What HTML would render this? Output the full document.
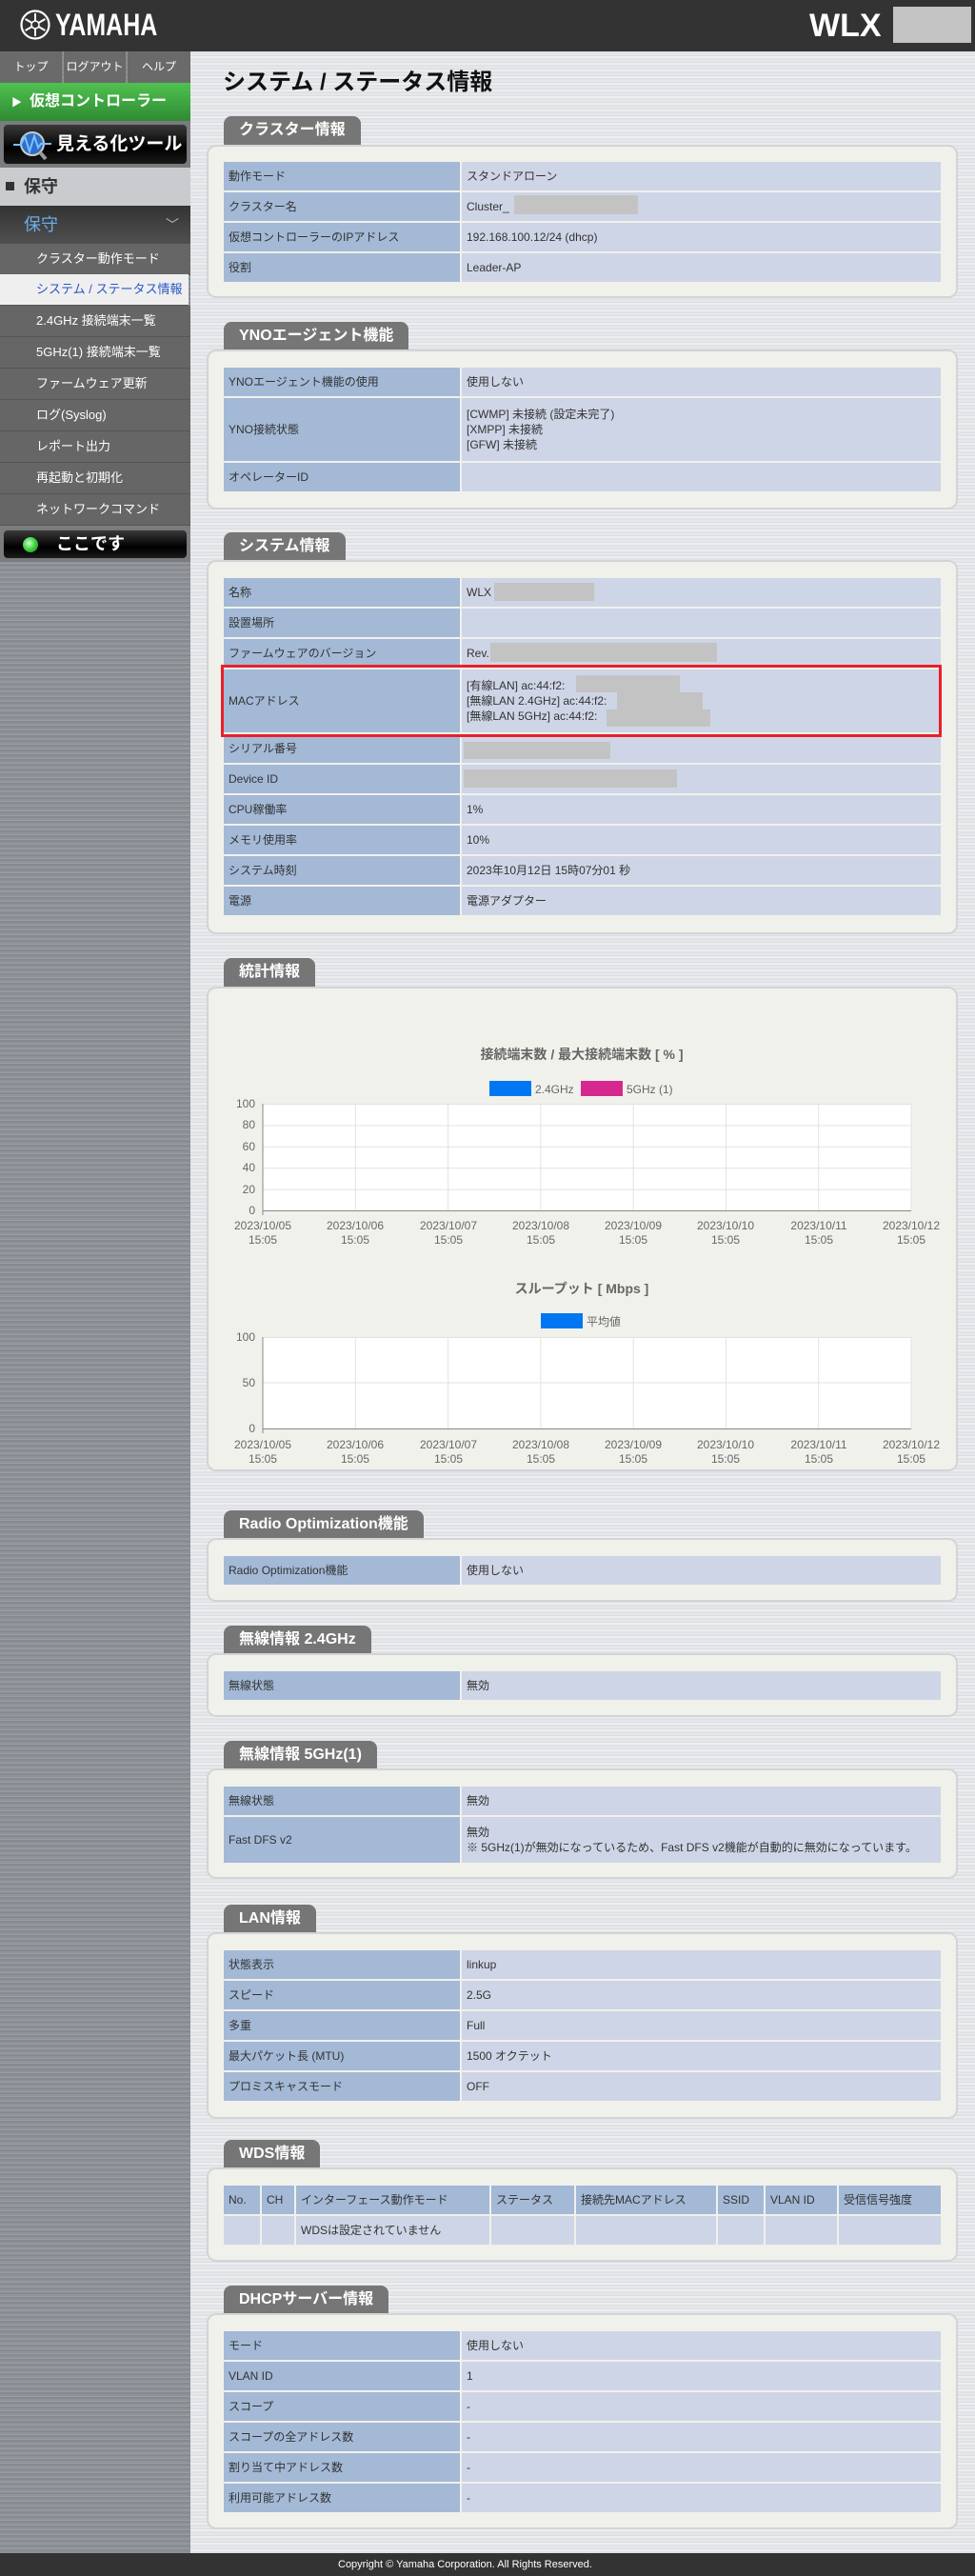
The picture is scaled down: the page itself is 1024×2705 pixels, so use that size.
<!DOCTYPE html>
<html><head><meta charset="utf-8">
<style>
*{margin:0;padding:0;box-sizing:border-box}
body{width:1024px;height:2705px;position:relative;overflow:hidden;font-family:"Liberation Sans","Noto Sans CJK JP",sans-serif;font-size:13px;color:#333;
background:repeating-linear-gradient(180deg,#e5e7ea 0,#e5e7ea 2px,#dadde1 2px,#dadde1 3px,#eceef0 3px,#eceef0 5px,#e0e3e6 5px,#e0e3e6 7px);}
.abs{position:absolute}
#hdr{left:0;top:0;width:1024px;height:54px;background:#333}
#side{left:0;top:54px;width:200px;height:2627px;background:repeating-linear-gradient(180deg,#8f9297 0,#8f9297 2px,#9a9da2 2px,#9a9da2 3px,#878a90 3px,#878a90 5px)}
#foot{left:0;top:2681px;width:1024px;height:24px;background:#333;color:#fff;font-size:11px;line-height:24px}
.nav{top:54px;height:33px;background:#6a6a6a;color:#fff;font-size:12px;text-align:center;line-height:33px}
.item{left:0;width:200px;height:33px;background:#666;color:#fff;font-size:13px;line-height:32px;padding-left:38px;border-bottom:1px solid #555}
.tab{left:235px;height:30px;background:#767676;border-radius:8px 8px 0 0;color:#fff;font-weight:bold;font-size:16px;line-height:30px;padding:0 16px}
.panel{left:217px;width:789px;background:#f1f1ec;border:2px solid #d2d4d6;border-radius:10px}
table{position:absolute;left:233px;width:757px;border-spacing:2px;border-collapse:separate}
td{font-size:12px;padding:0 5px;vertical-align:middle;line-height:16px;white-space:nowrap}
td.l{background:#a3b9d6;width:248px}
td.v{background:#ced5e6}
.red{background:#c3c3c3;position:absolute}
svg text{font-family:"Liberation Sans","Noto Sans CJK JP",sans-serif}
</style></head><body>
<div id="hdr" class="abs">
 <svg class="abs" style="left:20px;top:9px" width="34" height="34" viewBox="0 0 34 34"><circle cx="17" cy="17" r="14.5" fill="none" stroke="#fff" stroke-width="2.2"/><g stroke="#fff" stroke-width="2"><line x1="17" y1="5" x2="17" y2="29"/><line x1="6.6" y1="11" x2="27.4" y2="23"/><line x1="6.6" y1="23" x2="27.4" y2="11"/></g><circle cx="17" cy="17" r="4" fill="#333" stroke="#fff" stroke-width="1.5"/></svg>
 <div class="abs" style="left:58px;top:6px;color:#fff;font-weight:bold;font-size:32px;line-height:40px;transform:scaleX(0.78);transform-origin:0 0">YAMAHA</div>
 <div class="abs" style="left:850px;top:8px;color:#fff;font-weight:bold;font-size:34px;line-height:38px">WLX</div>
 <div class="red" style="left:938px;top:7px;width:82px;height:38px"></div>
</div>
<div id="side" class="abs"></div>
<div class="abs nav" style="left:0;width:66px;border-right:1px solid #888">トップ</div>
<div class="abs nav" style="left:67px;width:66px;border-right:1px solid #888">ログアウト</div>
<div class="abs nav" style="left:134px;width:66px">ヘルプ</div>
<div class="abs" style="left:0;top:87px;width:200px;height:40px;background:linear-gradient(#4fc24f,#2f8a33);color:#fff;font-weight:bold;font-size:16px;line-height:40px;padding-left:12px"><span style="font-size:11px;margin-right:8px">▶</span>仮想コントローラー</div>
<div class="abs" style="left:0;top:127px;width:200px;height:49px;background:#7a7c80"></div>
<div class="abs" style="left:3px;top:130px;width:194px;height:43px;background:linear-gradient(#3a3a3a,#000 60%,#1a1a1a);border:1px solid #777;border-radius:5px;color:#fff;font-weight:bold;font-size:19px;line-height:41px;padding-left:55px">見える化ツール
 <svg class="abs" style="left:8px;top:4px" width="44" height="36" viewBox="0 0 44 36"><circle cx="22" cy="16" r="12" fill="#2d6fc4" stroke="#ccc" stroke-width="2"/><path d="M2 17h8l4-9 5 16 5-16 4 12 3-4h11" fill="none" stroke="#7cc0ff" stroke-width="2"/><line x1="30" y1="25" x2="36" y2="32" stroke="#999" stroke-width="4"/></svg></div>
<div class="abs" style="left:0;top:176px;width:200px;height:40px;background:#c9cbcf;color:#333;font-weight:bold;font-size:18px;line-height:40px;padding-left:6px"><span style="display:inline-block;width:9px;height:9px;background:#333;margin-right:10px;vertical-align:2px"></span>保守</div>
<div class="abs" style="left:0;top:216px;width:200px;height:40px;background:linear-gradient(#333,#505050);color:#6aaee8;font-size:18px;line-height:40px;padding-left:25px">保守<span style="position:absolute;right:12px;top:0;color:#bbb;font-size:14px">﹀</span></div>
<div class="abs item" style="top:256px">クラスター動作モード</div>
<div class="abs item" style="top:288px;width:198px;background:#efefef;color:#2a56c6;padding-left:38px">システム / ステータス情報</div>
<div class="abs item" style="top:321px">2.4GHz 接続端末一覧</div>
<div class="abs item" style="top:354px">5GHz(1) 接続端末一覧</div>
<div class="abs item" style="top:387px">ファームウェア更新</div>
<div class="abs item" style="top:420px">ログ(Syslog)</div>
<div class="abs item" style="top:453px">レポート出力</div>
<div class="abs item" style="top:486px">再起動と初期化</div>
<div class="abs item" style="top:519px">ネットワークコマンド</div>
<div class="abs" style="left:0;top:552px;width:200px;height:38px;background:#7a7c80"></div>
<div class="abs" style="left:3px;top:556px;width:194px;height:31px;background:linear-gradient(#3a3a3a,#000 60%,#1a1a1a);border:1px solid #777;border-radius:5px;color:#fff;font-weight:bold;font-size:18px;line-height:29px;padding-left:55px">ここです<span style="position:absolute;left:20px;top:7px;width:16px;height:16px;border-radius:50%;background:radial-gradient(circle at 40% 40%,#c8ffc8,#3ccf3c 50%,#1a8a1a)"></span></div>

<div class="abs" style="left:234px;top:72px;font-size:24px;font-weight:bold;color:#111;line-height:30px">システム / ステータス情報</div>

<div class="abs tab" style="top:122px">クラスター情報</div>
<div class="abs panel" style="top:152px;height:161px"></div>
<table style="top:168px"><tr style="height:30px"><td class="l">動作モード</td><td class="v">スタンドアローン</td></tr>
<tr style="height:30px"><td class="l">クラスター名</td><td class="v">Cluster_</td></tr>
<tr style="height:30px"><td class="l">仮想コントローラーのIPアドレス</td><td class="v">192.168.100.12/24 (dhcp)</td></tr>
<tr style="height:30px"><td class="l">役割</td><td class="v">Leader-AP</td></tr></table>
<div class="red" style="left:540px;top:205px;width:130px;height:20px"></div>

<div class="abs tab" style="top:338px">YNOエージェント機能</div>
<div class="abs panel" style="top:367px;height:168px"></div>
<table style="top:384px"><tr style="height:30px"><td class="l">YNOエージェント機能の使用</td><td class="v">使用しない</td></tr>
<tr style="height:66px"><td class="l">YNO接続状態</td><td class="v">[CWMP] 未接続 (設定未完了)<br>[XMPP] 未接続<br>[GFW] 未接続</td></tr>
<tr style="height:30px"><td class="l">オペレーターID</td><td class="v"></td></tr></table>

<div class="abs tab" style="top:559px">システム情報</div>
<div class="abs panel" style="top:588px;height:393px"></div>
<table style="top:605px"><tr style="height:30px"><td class="l">名称</td><td class="v">WLX</td></tr>
<tr style="height:30px"><td class="l">設置場所</td><td class="v"></td></tr>
<tr style="height:30px"><td class="l">ファームウェアのバージョン</td><td class="v">Rev.</td></tr>
<tr style="height:66px"><td class="l">MACアドレス</td><td class="v">[有線LAN] ac:44:f2:<br>[無線LAN 2.4GHz] ac:44:f2:<br>[無線LAN 5GHz] ac:44:f2:</td></tr>
<tr style="height:30px"><td class="l">シリアル番号</td><td class="v"></td></tr>
<tr style="height:30px"><td class="l">Device ID</td><td class="v"></td></tr>
<tr style="height:30px"><td class="l">CPU稼働率</td><td class="v">1%</td></tr>
<tr style="height:30px"><td class="l">メモリ使用率</td><td class="v">10%</td></tr>
<tr style="height:30px"><td class="l">システム時刻</td><td class="v">2023年10月12日 15時07分01 秒</td></tr>
<tr style="height:30px"><td class="l">電源</td><td class="v">電源アダプター</td></tr></table>
<div class="red" style="left:519px;top:612px;width:105px;height:19px"></div>
<div class="red" style="left:515px;top:675px;width:238px;height:20px"></div>
<div class="red" style="left:605px;top:709px;width:109px;height:18px"></div>
<div class="red" style="left:648px;top:727px;width:90px;height:18px"></div>
<div class="red" style="left:637px;top:745px;width:109px;height:18px"></div>
<div class="red" style="left:487px;top:779px;width:154px;height:18px"></div>
<div class="red" style="left:487px;top:808px;width:224px;height:19px"></div>
<div class="abs" style="left:232px;top:698px;width:757px;height:76px;border:3px solid #e8202a"></div>

<div class="abs tab" style="top:1006px">統計情報</div>
<div class="abs panel" style="top:1036px;height:509px"></div>
<svg class="abs" style="left:200px;top:1036px" width="800" height="509" font-size="12" fill="#666">
 <text x="411" y="76" text-anchor="middle" font-weight="bold" font-size="14">接続端末数 / 最大接続端末数 [ % ]</text>
 <rect x="314" y="99" width="44" height="16" fill="#0077f2"/><text x="362" y="112">2.4GHz</text>
 <rect x="410" y="99" width="44" height="16" fill="#d6298f"/><text x="458" y="112">5GHz (1)</text>
 <rect x="76" y="123" width="681" height="112" fill="#fff"/>
 <g stroke="#e2e2e2" stroke-width="1">
  <line x1="76" y1="123.5" x2="757" y2="123.5"/><line x1="76" y1="145.9" x2="757" y2="145.9"/><line x1="76" y1="168.3" x2="757" y2="168.3"/><line x1="76" y1="190.7" x2="757" y2="190.7"/><line x1="76" y1="213.1" x2="757" y2="213.1"/>
  <line x1="173.3" y1="123" x2="173.3" y2="235"/><line x1="270.6" y1="123" x2="270.6" y2="235"/><line x1="367.9" y1="123" x2="367.9" y2="235"/><line x1="465.2" y1="123" x2="465.2" y2="235"/><line x1="562.4" y1="123" x2="562.4" y2="235"/><line x1="659.7" y1="123" x2="659.7" y2="235"/><line x1="757" y1="123" x2="757" y2="235"/>
 </g>
 <g stroke="#888"><line x1="76" y1="123" x2="76" y2="240"/><line x1="76" y1="235.5" x2="757" y2="235.5"/></g>
 <g text-anchor="end"><text x="68" y="127">100</text><text x="68" y="149">80</text><text x="68" y="172">60</text><text x="68" y="194">40</text><text x="68" y="217">20</text><text x="68" y="239">0</text></g>
 <g text-anchor="middle">
  <text x="76" y="255">2023/10/05</text><text x="76" y="270">15:05</text>
  <text x="173" y="255">2023/10/06</text><text x="173" y="270">15:05</text>
  <text x="271" y="255">2023/10/07</text><text x="271" y="270">15:05</text>
  <text x="368" y="255">2023/10/08</text><text x="368" y="270">15:05</text>
  <text x="465" y="255">2023/10/09</text><text x="465" y="270">15:05</text>
  <text x="562" y="255">2023/10/10</text><text x="562" y="270">15:05</text>
  <text x="660" y="255">2023/10/11</text><text x="660" y="270">15:05</text>
  <text x="757" y="255">2023/10/12</text><text x="757" y="270">15:05</text>
 </g>
 <text x="411" y="322" text-anchor="middle" font-weight="bold" font-size="14">スループット [ Mbps ]</text>
 <rect x="368" y="343" width="44" height="16" fill="#0077f2"/><text x="416" y="356">平均値</text>
 <rect x="76" y="368" width="681" height="96" fill="#fff"/>
 <g stroke="#e2e2e2" stroke-width="1">
  <line x1="76" y1="368.5" x2="757" y2="368.5"/><line x1="76" y1="416" x2="757" y2="416"/>
  <line x1="173.3" y1="368" x2="173.3" y2="464"/><line x1="270.6" y1="368" x2="270.6" y2="464"/><line x1="367.9" y1="368" x2="367.9" y2="464"/><line x1="465.2" y1="368" x2="465.2" y2="464"/><line x1="562.4" y1="368" x2="562.4" y2="464"/><line x1="659.7" y1="368" x2="659.7" y2="464"/><line x1="757" y1="368" x2="757" y2="464"/>
 </g>
 <g stroke="#888"><line x1="76" y1="368" x2="76" y2="469"/><line x1="76" y1="464.5" x2="757" y2="464.5"/></g>
 <g text-anchor="end"><text x="68" y="372">100</text><text x="68" y="420">50</text><text x="68" y="468">0</text></g>
 <g text-anchor="middle">
  <text x="76" y="485">2023/10/05</text><text x="76" y="500">15:05</text>
  <text x="173" y="485">2023/10/06</text><text x="173" y="500">15:05</text>
  <text x="271" y="485">2023/10/07</text><text x="271" y="500">15:05</text>
  <text x="368" y="485">2023/10/08</text><text x="368" y="500">15:05</text>
  <text x="465" y="485">2023/10/09</text><text x="465" y="500">15:05</text>
  <text x="562" y="485">2023/10/10</text><text x="562" y="500">15:05</text>
  <text x="660" y="485">2023/10/11</text><text x="660" y="500">15:05</text>
  <text x="757" y="485">2023/10/12</text><text x="757" y="500">15:05</text>
 </g>
</svg>

<div class="abs tab" style="top:1586px">Radio Optimization機能</div>
<div class="abs panel" style="top:1615px;height:67px"></div>
<table style="top:1632px"><tr style="height:30px"><td class="l">Radio Optimization機能</td><td class="v">使用しない</td></tr></table>

<div class="abs tab" style="top:1707px">無線情報 2.4GHz</div>
<div class="abs panel" style="top:1736px;height:67px"></div>
<table style="top:1753px"><tr style="height:30px"><td class="l">無線状態</td><td class="v">無効</td></tr></table>

<div class="abs tab" style="top:1828px">無線情報 5GHz(1)</div>
<div class="abs panel" style="top:1857px;height:116px"></div>
<table style="top:1874px"><tr style="height:30px"><td class="l">無線状態</td><td class="v">無効</td></tr>
<tr style="height:48px"><td class="l">Fast DFS v2</td><td class="v">無効<br>※ 5GHz(1)が無効になっているため、Fast DFS v2機能が自動的に無効になっています。</td></tr></table>

<div class="abs tab" style="top:2000px">LAN情報</div>
<div class="abs panel" style="top:2029px;height:196px"></div>
<table style="top:2046px"><tr style="height:30px"><td class="l">状態表示</td><td class="v">linkup</td></tr>
<tr style="height:30px"><td class="l">スピード</td><td class="v">2.5G</td></tr>
<tr style="height:30px"><td class="l">多重</td><td class="v">Full</td></tr>
<tr style="height:30px"><td class="l">最大パケット長 (MTU)</td><td class="v">1500 オクテット</td></tr>
<tr style="height:30px"><td class="l">プロミスキャスモード</td><td class="v">OFF</td></tr></table>

<div class="abs tab" style="top:2247px">WDS情報</div>
<div class="abs panel" style="top:2276px;height:99px"></div>
<table style="top:2293px;table-layout:fixed"><tr style="height:30px"><td class="l" style="width:38px">No.</td><td class="l" style="width:34px">CH</td><td class="l" style="width:203px">インターフェース動作モード</td><td class="l" style="width:87px">ステータス</td><td class="l" style="width:147px">接続先MACアドレス</td><td class="l" style="width:48px">SSID</td><td class="l" style="width:75px">VLAN ID</td><td class="l" style="width:auto">受信信号強度</td></tr>
<tr style="height:30px"><td class="v"></td><td class="v"></td><td class="v">WDSは設定されていません</td><td class="v"></td><td class="v"></td><td class="v"></td><td class="v"></td><td class="v"></td></tr></table>

<div class="abs tab" style="top:2400px">DHCPサーバー情報</div>
<div class="abs panel" style="top:2429px;height:227px"></div>
<table style="top:2446px"><tr style="height:30px"><td class="l">モード</td><td class="v">使用しない</td></tr>
<tr style="height:30px"><td class="l">VLAN ID</td><td class="v">1</td></tr>
<tr style="height:30px"><td class="l">スコープ</td><td class="v">-</td></tr>
<tr style="height:30px"><td class="l">スコープの全アドレス数</td><td class="v">-</td></tr>
<tr style="height:30px"><td class="l">割り当て中アドレス数</td><td class="v">-</td></tr>
<tr style="height:30px"><td class="l">利用可能アドレス数</td><td class="v">-</td></tr></table>

<div id="foot" class="abs"><span style="position:absolute;left:355px">Copyright © Yamaha Corporation. All Rights Reserved.</span></div>
</body></html>
